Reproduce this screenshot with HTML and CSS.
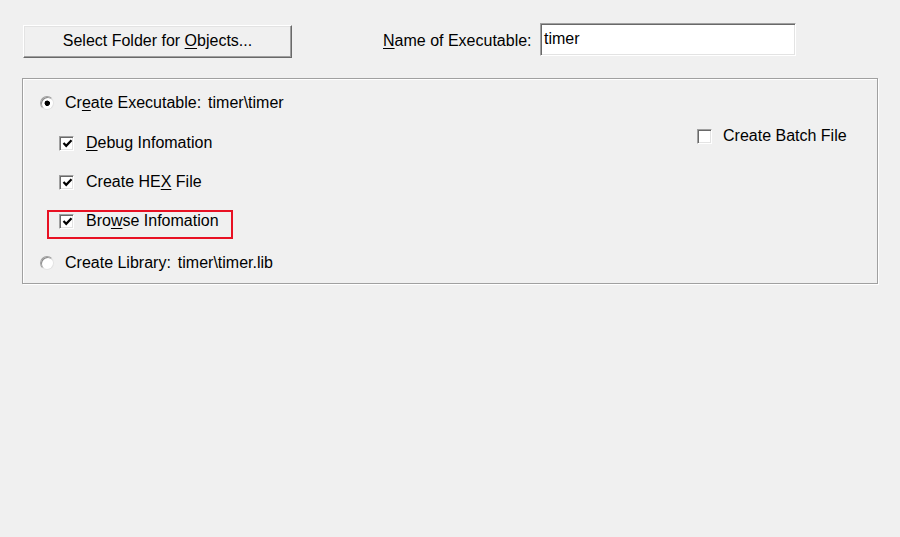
FILE: index.html
```html
<!DOCTYPE html>
<html>
<head>
<meta charset="utf-8">
<link rel="stylesheet" href="styles.css">
</head>
<body>
<div class="top">
  <div class="btn"><span>Select Folder for <u>O</u>bjects...</span></div>
  <div class="lbl"><span><u>N</u>ame of Executable:</span></div>
  <div class="edit">timer</div>
</div>
<div class="group">
  <div class="col-left">
    <div class="row r-radio1"><span class="radio on"></span><span class="txt radio-txt">Cr<u>e</u>ate Executable:<span class="sp"></span>timer\timer</span></div>
    <div class="row r-check r-debug"><span class="check"><svg width="11" height="11" viewBox="0 0 11 11"><path d="M1.5 5 L4.2 7.8 L9.5 2.2" fill="none" stroke="#000" stroke-width="2.2"/></svg></span><span class="txt"><u>D</u>ebug Infomation</span></div>
    <div class="row r-check"><span class="check"><svg width="11" height="11" viewBox="0 0 11 11"><path d="M1.5 5 L4.2 7.8 L9.5 2.2" fill="none" stroke="#000" stroke-width="2.2"/></svg></span><span class="txt">Create HE<u>X</u> File</span></div>
    <div class="row r-check hl"><span class="check"><svg width="11" height="11" viewBox="0 0 11 11"><path d="M1.5 5 L4.2 7.8 L9.5 2.2" fill="none" stroke="#000" stroke-width="2.2"/></svg></span><span class="txt">Bro<u>w</u>se Infomation</span></div>
    <div class="row r-lib"><span class="radio"></span><span class="txt radio-txt">Create Library:<span class="sp"></span>timer\timer.lib</span></div>
  </div>
  <div class="col-right">
    <div class="row"><span class="check"></span><span class="txt batch-txt">Create Batch File</span></div>
  </div>
</div>
</body>
</html>
```

FILE: styles.css
```css
html, body {
  margin: 0;
  padding: 0;
  background: #f0f0f0;
}
body {
  width: 900px;
  height: 537px;
  font-family: "Liberation Sans", Arial, sans-serif;
  font-size: 16px;
  color: #000;
}
u {
  text-decoration: underline;
  text-underline-offset: 2px;
}
.top {
  display: flex;
  align-items: flex-start;
  padding: 23px 0 0 23px;
}
.btn {
  box-sizing: border-box;
  width: 269px;
  height: 33px;
  margin-top: 2px;
  display: flex;
  align-items: center;
  justify-content: center;
  background: #f0f0f0;
  border: 1px solid;
  border-color: #fff #696969 #696969 #fff;
  box-shadow: inset -1px -1px 0 #a0a0a0, inset 1px 1px 0 #e3e3e3;
  padding-bottom: 1px;
  white-space: pre;
}
.lbl {
  box-sizing: border-box;
  width: 157px;
  margin-left: 91px;
  height: 33px;
  margin-top: 1px;
  display: flex;
  align-items: center;
}
.edit {
  box-sizing: border-box;
  width: 256px;
  height: 33px;
  background: #fff;
  border: 1px solid;
  border-color: #a0a0a0 #fff #fff #a0a0a0;
  box-shadow: inset 1px 1px 0 #696969, inset -1px -1px 0 #e3e3e3;
  padding: 6px 0 0 3px;
  line-height: 18px;
}
.group {
  box-sizing: border-box;
  width: 856px;
  height: 206px;
  margin: 20px 0 0 22px;
  border: 1px solid #a0a0a0;
  box-shadow: inset 1px 1px 0 #fff, 1px 1px 0 #fff;
  display: grid;
  grid-template-columns: 674px 1fr;
}
.col-left {
  display: flex;
  flex-direction: column;
  padding: 12px 0 0 17px;
}
.col-right {
  padding-top: 45px;
}
.row {
  position: relative;
  height: 24px;
  display: flex;
  align-items: center;
}
.r-check {
  margin-top: 15px;
  padding-left: 19px;
}
.r-debug {
  margin-top: 16px;
}
.r-lib {
  margin-top: 18px;
}
.txt {
  margin-left: 12px;
  line-height: 18px;
}
.radio-txt {
  margin-left: 11px;
}
.batch-txt {
  margin-left: 11px;
}
.sp {
  display: inline-block;
  width: 7px;
}
.check {
  box-sizing: border-box;
  width: 15px;
  height: 15px;
  flex: none;
  background: #fff;
  border: 1px solid;
  border-color: #a0a0a0 #fff #fff #a0a0a0;
  box-shadow: inset 1px 1px 0 #696969, inset -1px -1px 0 #e3e3e3;
  display: flex;
  align-items: center;
  justify-content: center;
  padding: 1px 0 0 1px;
}
.check svg {
  display: block;
}
.radio {
  box-sizing: border-box;
  width: 14px;
  height: 14px;
  flex: none;
  border-radius: 50%;
  background: #fff;
  border: 1px solid;
  border-color: #a0a0a0 #e3e3e3 #e3e3e3 #a0a0a0;
  box-shadow: inset 1px 1px 0 #8a8a8a;
}
.radio.on {
  background: radial-gradient(circle at 52% 52%, #000 0, #000 2.4px, #fff 3px);
}
.hl::after {
  content: "";
  position: absolute;
  left: 7px;
  top: 1px;
  width: 182px;
  height: 25px;
  border: 2px solid #e81123;
}
```
